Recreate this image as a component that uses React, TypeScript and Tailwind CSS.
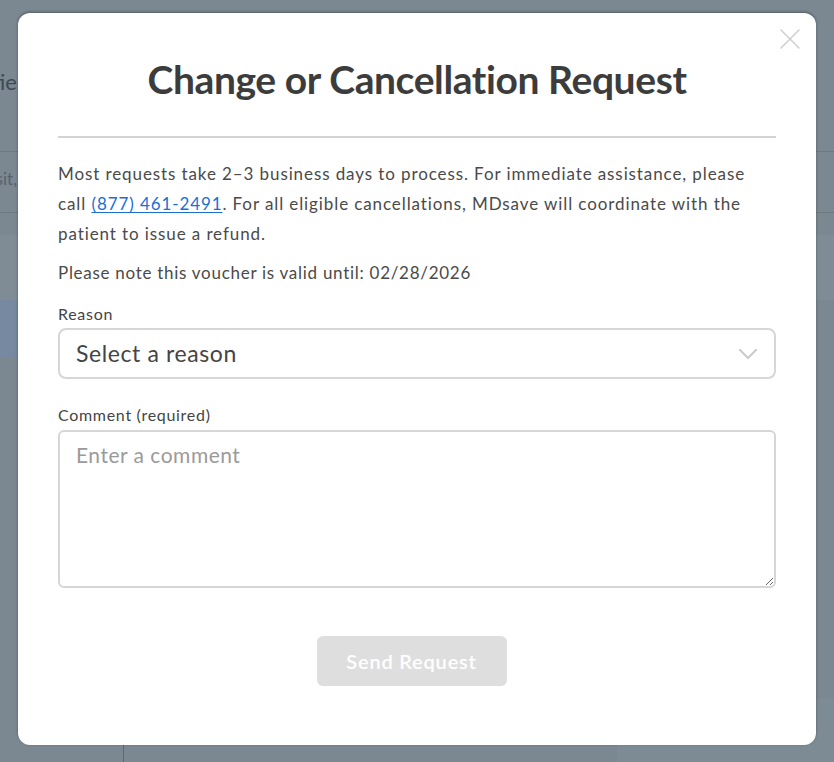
import React, { useState } from 'react';

function CloseIcon() {
  return (
    <svg width="22" height="22" viewBox="0 0 22 22" fill="none">
      <path d="M2 2L20 20M20 2L2 20" stroke="#cfcfcf" strokeWidth="1.6" strokeLinecap="round" />
    </svg>
  );
}

function Chevron() {
  return (
    <svg width="20" height="14" viewBox="0 0 20 14" fill="none">
      <path d="M2 3L10 11L18 3" stroke="#cccccc" strokeWidth="2.2" strokeLinecap="round" strokeLinejoin="round" />
    </svg>
  );
}

function BackgroundPage() {
  // the page behind the dimmed overlay
  return (
    <div className="h-[762px] overflow-hidden bg-[#7b8891] text-[#3e4a52] font-['Lato',sans-serif]">
      <div className="h-[13px]" />
      <div className="h-[139px] border-b border-[#6c7880] flex">
        <div className="w-[17px] flex justify-end whitespace-nowrap pt-[52px] text-[22px]">Patie</div>
      </div>
      <div className="h-[61px] border-b border-[#6c7880] flex">
        <div className="w-[17px] flex justify-end whitespace-nowrap pt-[14px] text-[17px] text-[#56626a]">visit,</div>
      </div>
      <div className="h-[22px]" />
      <div className="h-[65px] bg-[#7f8c95]" />
      <div className="h-[58px] bg-[#7689a0] w-[60px]" />
      <div className="h-[340px]" />
      <div className="flex h-[64px]">
        <div className="w-[123px]" />
        <div className="border-l border-[#5d6870] flex-1 pl-[28px] text-[22px] leading-none text-[#4b575f]">
          Ordered February 26, 2025
        </div>
        <div className="w-[217px] bg-[#7d8b95] pl-[17px] text-[22px] text-[#4b575f]">Subtotal</div>
      </div>
    </div>
  );
}

export default function App() {
  const [reason, setReason] = useState('');
  const [comment, setComment] = useState('');

  return (
    <div className="relative w-[834px] h-[762px] overflow-hidden">
      <BackgroundPage />

      <div className="absolute inset-0 flex justify-center pt-[13px]">
        <div className="relative w-[798px] h-[732px] bg-white rounded-[12px] shadow-[0_-1px_3px_rgba(0,0,0,0.35)] px-[40px] pt-[42px] font-['Lato',sans-serif]">
          <button className="absolute right-[15px] top-[15px]" aria-label="Close">
            <CloseIcon />
          </button>

          <h1 className="text-center text-[39px] leading-[48px] font-bold text-[#3c3c3c] tracking-[-0.4px]">
            Change or Cancellation Request
          </h1>
          <div className="mt-[33px] h-[2px] bg-[#d3d3d3]" />

          <p className="mt-[21px] text-[17px] leading-[30px] text-[#4a4a4a] tracking-[0.9px]">
            Most requests take 2–3 business days to process. For immediate assistance, please call{' '}
            <a href="#" className="text-[#1a6fd6] underline underline-offset-2">(877) 461-2491</a>. For all
            eligible cancellations, MDsave will coordinate with the patient to issue a refund.
          </p>
          <p className="mt-[12px] text-[17px] leading-[24px] text-[#4a4a4a] tracking-[0.72px]">
            Please note this voucher is valid until: 02/28/2026
          </p>

          <label className="block mt-[19px] text-[16px] leading-[20px] text-[#444] tracking-[0.7px]">Reason</label>
          <div className="relative mt-[4px]">
            <select
              value={reason}
              onChange={e => setReason(e.target.value)}
              className="appearance-none w-full h-[51px] rounded-[8px] border-2 border-[#d6d6d6] bg-white pl-[16px] text-[23px] tracking-[0.6px] text-[#444] outline-none"
            >
              <option value="">Select a reason</option>
              <option value="change">Change appointment</option>
              <option value="cancel">Cancel voucher</option>
            </select>
            <span className="pointer-events-none absolute right-[18px] top-[19px]">
              <Chevron />
            </span>
          </div>

          <label className="block mt-[26px] text-[16px] leading-[20px] text-[#444] tracking-[0.7px]">
            Comment (required)
          </label>
          <textarea
            value={comment}
            onChange={e => setComment(e.target.value)}
            placeholder="Enter a comment"
            className="block mt-[5px] w-full h-[158px] rounded-[6px] border-2 border-[#d6d6d6] px-[16px] py-[9px] text-[21px] leading-[28px] tracking-[0.5px] text-[#444] placeholder:text-[#9a9a9a] outline-none"
          />

          <div className="mt-[48px] flex justify-center pr-[11px]">
            <button
              disabled
              className="w-[190px] h-[50px] rounded-[6px] bg-[#dedede] text-white text-[20px] font-semibold tracking-[0.8px]"
            >
              Send Request
            </button>
          </div>
        </div>
      </div>
    </div>
  );
}
